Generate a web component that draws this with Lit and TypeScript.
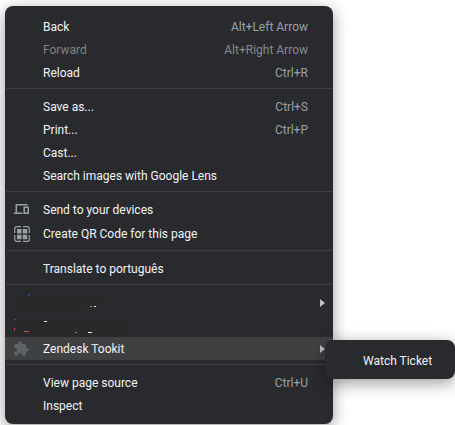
import { LitElement, html, css, svg, nothing } from "lit";
import { customElement } from "lit/decorators.js";
import { classMap } from "lit/directives/class-map.js";

interface Item {
  label: string;
  keys?: string;
  icon?: "devices" | "qr" | "puzzle";
  disabled?: boolean;
  active?: boolean;
  hidden?: boolean;
  submenu?: string[];
  arrow?: boolean;
}

const groups: Item[][] = [
  [
    { label: "Back", keys: "Alt+Left Arrow" },
    { label: "Forward", keys: "Alt+Right Arrow", disabled: true },
    { label: "Reload", keys: "Ctrl+R" },
  ],
  [
    { label: "Save as...", keys: "Ctrl+S" },
    { label: "Print...", keys: "Ctrl+P" },
    { label: "Cast..." },
    { label: "Search images with Google Lens" },
  ],
  [
    { label: "Send to your devices", icon: "devices" },
    { label: "Create QR Code for this page", icon: "qr" },
  ],
  [{ label: "Translate to português" }],
  [
    { label: "", hidden: true, arrow: true },
    { label: "", hidden: true },
    { label: "Zendesk Tookit", icon: "puzzle", active: true, arrow: true, submenu: ["Watch Ticket"] },
  ],
  [{ label: "View page source", keys: "Ctrl+U" }, { label: "Inspect" }],
];

const icons = {
  devices: svg`<path d="M2.300 10.500V2.700H13.500M0 11.200h8.500" fill="none" stroke="#9aa0a6" stroke-width="1.500"/>
    <rect x="10.200" y="5.200" width="4" height="6" fill="none" stroke="#9aa0a6" stroke-width="1.500"/>`,
  qr: svg`<path d="M.7 7V2.700a2 2 0 0 1 2-2H7M9 .7h4.300a2 2 0 0 1 2 2V7M15.300 9v4.300a2 2 0 0 1-2 2H9M7 15.300H2.700a2 2 0 0 1-2-2V9" fill="none" stroke="#9aa0a6" stroke-width="1.200"/>
    <path d="M3 3h4.500v4.500H3zM8.700 3H13.200v4.500H8.700zM3 8.700h4.500v4.500H3zM8.700 8.700h4.500v4.500H8.700z" fill="#9aa0a6"/>`,
  puzzle: svg`<path transform="translate(-1 -.4) scale(.68)" d="M20.500 11H19V7c0-1.100-.9-2-2-2h-4V3.500a2.500 2.500 0 0 0-5 0V5H4c-1.100 0-2 .9-2 2v3.800h1.500a2.700 2.700 0 0 1 0 5.400H2V20c0 1.100.9 2 2 2h3.800v-1.500a2.700 2.700 0 0 1 5.400 0V22H17c1.100 0 2-.9 2-2v-4h1.500a2.500 2.500 0 0 0 0-5z" fill="#5f6368"/>`,
};

@customElement("app-root")
export class AppRoot extends LitElement {
  static styles = css`
    :host {
      display: block;
      font: 12px/16px "Segoe UI", Roboto, "Open Sans", sans-serif;
      color: #f1f3f4;
      background: #fff;
      overflow: hidden;
    }
    .page { padding: 6px 122px 1px 5px; }
    .menu {
      background: #292a2d;
      border-radius: 8px;
      padding: 9px 0 7px;
      box-shadow: 0 4px 16px rgba(0, 0, 0, 0.4);
    }
    .group + .group::before {
      content: "";
      display: block;
      height: 1px;
      margin: 4px 1px 6px;
      background: #3f4042;
    }
    .row { position: relative; }
    .item {
      display: flex;
      align-items: center;
      width: 100%;
      height: 23px;
      margin: 0;
      padding: 0 25px 0 9px;
      border: 0;
      background: none;
      color: inherit;
      font: inherit;
      text-align: left;
      white-space: nowrap;
    }
    .tall { height: 24px; }
    .active { background: #3f4042; }
    .disabled { color: #808387; }
    .icon { width: 16px; height: 16px; margin-right: 13px; flex: none; }
    .label { flex: 1; }
    .keys { color: #9aa0a6; }
    .disabled .keys { color: #85898e; }
    .withArrow { padding-right: 8px; }
    .arrow { width: 5px; height: 8px; fill: #bdc1c6; flex: none; }
    .redacted { position: absolute; left: 5px; top: 2px; width: 140px; height: 46px; }
    .submenu {
      position: absolute;
      z-index: 1;
      left: calc(100% - 8px);
      top: 3px;
      width: 130px;
      box-sizing: border-box;
      padding: 9px 0 7px;
      border-radius: 8px;
      background: #292a2d;
      box-shadow: 0 4px 16px rgba(0, 0, 0, 0.4);
    }
  `;

  private row(item: Item): unknown {
    return html`<div class="row">
      <button
        class=${classMap({
          item: true,
          tall: item.icon === "devices" || item.icon === "qr",
          active: !!item.active,
          disabled: !!item.disabled,
          withArrow: !!item.arrow,
        })}
        role="menuitem"
        ?disabled=${item.disabled}
        aria-label=${item.hidden ? "Extension" : nothing}
      >
        <svg class="icon" viewBox="0 0 16 16" aria-hidden="true">${item.icon ? icons[item.icon] : nothing}</svg>
        <span class="label">${item.label}</span>
        ${item.keys ? html`<span class="keys">${item.keys}</span>` : nothing}
        ${item.arrow
          ? html`<svg class="arrow" viewBox="0 0 5 8" aria-hidden="true"><path d="M0 0l5 4-5 4z" /></svg>`
          : nothing}
      </button>
      ${item.hidden && item.arrow ? this.scribble() : nothing}
      ${item.submenu
        ? html`<div class="submenu" role="menu">${item.submenu.map((label) => this.row({ label }))}</div>`
        : nothing}
    </div>`;
  }

  /* Marker strokes over two extension entries, with specks of the covered text. */
  private scribble() {
    return html`<svg class="redacted" viewBox="0 0 140 46" aria-hidden="true">
      <path d="M7 5L50 2 101 4 92 11 42 20 6 22zM4 32L50 24 118 30 128 38 90 43 30 41 6 43z" fill="#292929" />
      <path d="M18 1h2v2h-2zM4 10h1v1h-1z" fill="#234a78" />
      <path d="M4 26h2v1h-2z" fill="#8a3a34" />
      <path d="M4 35h1v2h-1zM14 38h5v1h-5z" fill="#d64a40" />
      <path d="M34 28h3v1h-3zM84 13h2v1h-2zM78 39h4v1h-4z" fill="#e8eaed" />
      <path d="M80 13h2v1h-2zM65 39h2v1h-2z" fill="#8f8465" />
    </svg>`;
  }

  render() {
    return html`<main class="page">
      <div class="menu" role="menu">
        ${groups.map((g) => html`<div class="group" role="group">${g.map((i) => this.row(i))}</div>`)}
      </div>
    </main>`;
  }
}
